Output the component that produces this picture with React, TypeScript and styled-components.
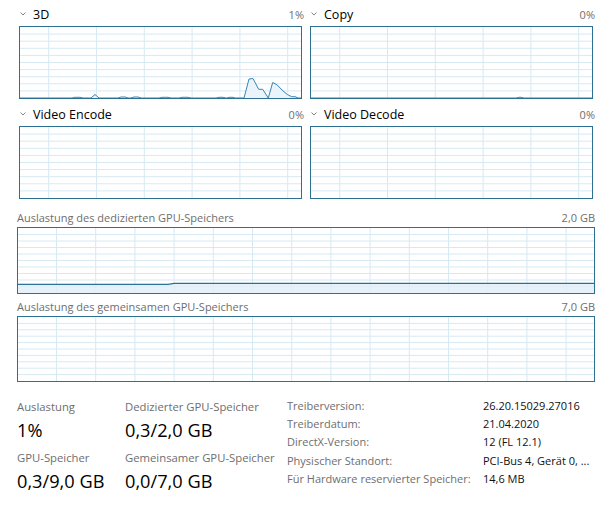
import React from 'react';
import styled, { createGlobalStyle } from 'styled-components';

const Global = createGlobalStyle`
  html, body { margin: 0; padding: 0; background: #fff; }
  body { font-family: "Open Sans", "Noto Sans", "Liberation Sans", sans-serif; color: #000; }
  * { box-sizing: border-box; }
`;

const BORDER = '#2c7193';
const GRID = '#d7e9f3';
const LINE = '#3585b8';
const FILL = '#e9f3fa';

const Page = styled.div`
  width: 613px;
  height: 519px;
  overflow: hidden;
  background: #fff;
`;

const TopGrid = styled.div`
  display: grid;
  grid-template-columns: 283px 283px;
  column-gap: 8px;
  row-gap: 1px;
  padding-left: 19px;
`;

const Cell = styled.div`
  display: flex;
  flex-direction: column;
`;

const CellHeader = styled.div`
  height: 26px;
  display: flex;
  align-items: center;
  margin-right: -2px;
  padding-top: 2px;
`;

const ChevronIcon = styled.svg`
  width: 6px;
  height: 4px;
  margin-left: 1px;
  flex: none;
`;

const Title = styled.span`
  font-size: 12.5px;
  margin-left: 7px;
  color: #000;
`;

const Percent = styled.span`
  margin-left: auto;
  font-size: 11px;
  color: #6e6e6e;
`;

const ChartBox = styled.div<{ $h: number }>`
  height: ${p => p.$h}px;
  border: 1px solid ${BORDER};
  background: #fff;
  overflow: hidden;
  svg {
    display: block;
    width: 100%;
    height: 100%;
  }
`;

const MemSection = styled.div<{ $top: number }>`
  padding: 0 18px 0 17px;
  margin-top: ${p => p.$top}px;
`;

const MemLabel = styled.div`
  height: 22px;
  padding-top: 3px;
  display: flex;
  align-items: center;
  justify-content: space-between;
  font-size: 11px;
  color: #6e6e6e;
`;

const Footer = styled.div`
  display: flex;
  padding: 17px 0 0 17px;
`;

const Stats = styled.div`
  display: grid;
  grid-template-columns: 108px 162px;
  row-gap: 5px;
`;

const Stat = styled.div`
  display: flex;
  flex-direction: column;
`;

const StatLabel = styled.div`
  font-size: 11.3px;
  line-height: 16px;
  color: #6e6e6e;
  white-space: nowrap;
`;

const StatValue = styled.div`
  font-size: 18.2px;
  line-height: 30px;
  color: #000;
  white-space: nowrap;
`;

const Info = styled.div`
  display: grid;
  grid-template-columns: 196px auto;
  grid-auto-rows: 18.4px;
  align-items: center;
  margin-top: -3px;
`;

const InfoLabel = styled.div`
  font-size: 11px;
  color: #6e6e6e;
  white-space: nowrap;
`;

const InfoValue = styled.div`
  font-size: 11px;
  color: #111;
  white-space: nowrap;
`;

const Chevron = () => (
  <ChevronIcon viewBox="0 0 6 4">
    <polyline points="0.5,0.5 3,3 5.5,0.5" fill="none" stroke="#777" strokeWidth="0.9" />
  </ChevronIcon>
);

type GridSpec = { w: number; h: number; offset: number; step: number };

const GridLines: React.FC<GridSpec> = ({ w, h, offset, step }) => {
  const vs: number[] = [];
  for (let x = offset; x < w; x += step) vs.push(x);
  const hs: number[] = [];
  for (let i = 1; i < 10; i++) hs.push((h / 10) * i);
  return (
    <g>
      {vs.map(x => (
        <line key={'v' + x} x1={x} x2={x} y1={0} y2={h} stroke={GRID} strokeWidth={1} />
      ))}
      {hs.map(y => (
        <line key={'h' + y} x1={0} x2={w} y1={y} y2={y} stroke={GRID} strokeWidth={1} />
      ))}
    </g>
  );
};

type Pt = [number, number];

const Series: React.FC<{ pts: Pt[]; h: number; stroke?: string; width?: number }> = ({ pts, h, stroke = LINE, width = 1 }) => {
  const line = pts.map(p => p.join(',')).join(' ');
  const area = `${pts[0][0]},${h} ${line} ${pts[pts.length - 1][0]},${h}`;
  return (
    <g>
      <polygon points={area} fill={FILL} opacity={0.9} />
      <polyline points={line} fill="none" stroke={stroke} strokeWidth={width} strokeLinejoin="round" />
    </g>
  );
};

const SW = 281;
const SH = 71;
const LW = 576;

// 3D data (global coords -> inner: x-20, y-27)
const g3d: Pt[] = [
  [20, 98], [72, 98], [75, 97.3], [80, 97.3], [83, 98],
  [91, 98], [95, 94.5], [99, 98],
  [118, 98], [121, 97], [125, 97], [128, 98],
  [131, 98], [134, 97], [138, 97], [141, 98],
  [159, 98], [162, 97.3], [168, 97.3], [171, 98],
  [179, 98], [182, 97.3], [188, 97.3], [191, 98],
  [216, 98], [219, 97.3], [223, 97.3], [226, 98],
  [227, 98], [229, 97.3], [233, 97.3], [235, 98],
  [244, 98], [249, 79], [253, 78.5], [258.7, 89.3], [262.7, 89.3], [268.3, 98],
  [272.7, 82.5], [277.3, 85], [282, 90], [287.3, 94.5], [291.7, 96.7], [295, 96.7], [298, 98], [302, 98],
];
const data3d: Pt[] = g3d.map(([x, y]) => [x - 20, y - 27]);

const dataCopy: Pt[] = [
  [0, 71], [205, 71], [209, 70.2], [213, 71], [281, 71],
];

const dataFlat: Pt[] = [[0, 71.5], [281, 71.5]];

const dataDedicated: Pt[] = [
  [0, 56.3], [150, 56.3], [156, 55.4], [576, 55.4],
];

const SmallChart: React.FC<{ data: Pt[] }> = ({ data }) => (
  <ChartBox $h={73}>
    <svg viewBox={`0 0 ${SW} ${SH}`} preserveAspectRatio="none">
      <GridLines w={SW} h={SH} offset={28.7} step={47.8} />
      <Series pts={data} h={SH} />
    </svg>
  </ChartBox>
);

const LargeChart: React.FC<{ h: number; data?: Pt[] }> = ({ h, data }) => {
  const ih = h - 2;
  return (
    <ChartBox $h={h}>
      <svg viewBox={`0 0 ${LW} ${ih}`} preserveAspectRatio="none">
        <GridLines w={LW} h={ih} offset={38.5} step={39.2} />
        {data && (
          <g>
            <polygon
              points={`0,${ih} ${data.map(p => p.join(',')).join(' ')} ${LW},${ih}`}
              fill="#e2eff8"
              opacity={0.85}
            />
            <polyline points={data.map(p => p.join(',')).join(' ')} fill="none" stroke={BORDER} strokeWidth={1.3} />
          </g>
        )}
      </svg>
    </ChartBox>
  );
};

const engines: { name: string; pct: string; data: Pt[] }[] = [
  { name: '3D', pct: '1%', data: data3d },
  { name: 'Copy', pct: '0%', data: dataCopy },
  { name: 'Video Encode', pct: '0%', data: dataFlat },
  { name: 'Video Decode', pct: '0%', data: dataFlat },
];

const stats = [
  { label: 'Auslastung', value: '1%' },
  { label: 'Dedizierter GPU-Speicher', value: '0,3/2,0 GB' },
  { label: 'GPU-Speicher', value: '0,3/9,0 GB' },
  { label: 'Gemeinsamer GPU-Speicher', value: '0,0/7,0 GB' },
];

const info = [
  ['Treiberversion:', '26.20.15029.27016'],
  ['Treiberdatum:', '21.04.2020'],
  ['DirectX-Version:', '12 (FL 12.1)'],
  ['Physischer Standort:', 'PCI-Bus 4, Gerät 0, ...'],
  ['Für Hardware reservierter Speicher:', '14,6 MB'],
];

export default function App() {
  return (
    <Page>
      <Global />
      <TopGrid>
        {engines.map(e => (
          <Cell key={e.name}>
            <CellHeader>
              <Chevron />
              <Title>{e.name}</Title>
              <Percent>{e.pct}</Percent>
            </CellHeader>
            <SmallChart data={e.data} />
          </Cell>
        ))}
      </TopGrid>
      <MemSection $top={6}>
        <MemLabel>
          <span>Auslastung des dedizierten GPU-Speichers</span>
          <span>2,0 GB</span>
        </MemLabel>
        <LargeChart h={67} data={dataDedicated} />
      </MemSection>
      <MemSection $top={0}>
        <MemLabel>
          <span>Auslastung des gemeinsamen GPU-Speichers</span>
          <span>7,0 GB</span>
        </MemLabel>
        <LargeChart h={66} />
      </MemSection>
      <Footer>
        <Stats>
          {stats.map(s => (
            <Stat key={s.label}>
              <StatLabel>{s.label}</StatLabel>
              <StatValue>{s.value}</StatValue>
            </Stat>
          ))}
        </Stats>
        <Info>
          {info.map(([l, v]) => (
            <React.Fragment key={l}>
              <InfoLabel>{l}</InfoLabel>
              <InfoValue>{v}</InfoValue>
            </React.Fragment>
          ))}
        </Info>
      </Footer>
    </Page>
  );
}
